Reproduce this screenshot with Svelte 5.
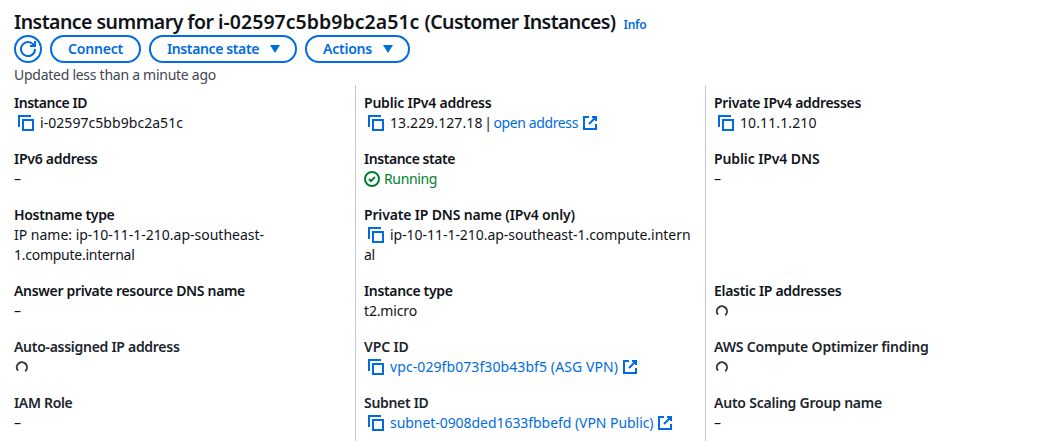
<script>
  const rows = [
    [
      { label: ['Instance ID', 73], copy: true, lines: [['i-02597c5bb9bc2a51c', 143]] },
      { label: ['Public IPv4 address', 127.5], copy: true, lines: [['13.229.127.18', 92.5]], link: ['open address', 84.5], split: true },
      { label: ['Private IPv4 addresses', 147], copy: true, lines: [['10.11.1.210', 76.5]] }
    ],
    [
      { label: ['IPv6 address', 83.5] },
      { label: ['Instance state', 91], running: true },
      { label: ['Public IPv4 DNS', 105.5] }
    ],
    [
      { label: ['Hostname type', 100.5], lines: [['IP name: ip-10-11-1-210.ap-southeast-', 250], ['1.compute.internal', 120.5]] },
      { label: ['Private IP DNS name (IPv4 only)', 211], copy: true, lines: [['ip-10-11-1-210.ap-southeast-1.compute.intern', 300.5], ['al', 11]] },
      null
    ],
    [
      { label: ['Answer private resource DNS name', 231] },
      { label: ['Instance type', 88.5], lines: [['t2.micro', 53]] },
      { label: ['Elastic IP addresses', 127.5], loading: true }
    ],
    [
      { label: ['Auto-assigned IP address', 165.5], loading: true, soft: true },
      { label: ['VPC ID', 44.5], copy: true, link: ['vpc-029fb073f30b43bf5 (ASG VPN)', 228], soft: true },
      { label: ['AWS Compute Optimizer finding', 214.5], loading: true, soft: true }
    ],
    [
      { label: ['IAM Role', 58.5], soft: true },
      { label: ['Subnet ID', 64.5], copy: true, link: ['subnet-0908ded1633fbbefd (VPN Public)', 263.5], soft: true },
      { label: ['Auto Scaling Group name', 168], soft: true }
    ]
  ];

  function fit(node, width) {
    const natural = node.getBoundingClientRect().width;
    node.style.letterSpacing = `${(width - natural) / node.textContent.length}px`;
  }
</script>

{#snippet copyIcon()}
  <svg class="icon copy" viewBox="0 0 16 16"><path d="M1 12V1h12M5 5h10v10H5z" /></svg>
{/snippet}

{#snippet externalIcon()}
  <svg class="icon external" viewBox="0 0 16 16"><path d="M10 2h4v4M7 9l7-7M14 9v5H2V2h5" /></svg>
{/snippet}

{#snippet caret()}
  <svg class="icon caret" viewBox="0 0 16 16"><path d="M3 4h10L8 12z" /></svg>
{/snippet}

<section>
  <header>
    <div class="heading">
      <h1><span use:fit={204}>Instance summary for&nbsp;</span><span use:fit={206.5}>i-02597c5bb9bc2a51c&nbsp;</span><span use:fit={191}>(Customer Instances)</span></h1>
      <a class="info" href="#info"><span use:fit={23}>Info</span></a>
    </div>
    <div class="actions">
      <button class="round" aria-label="Refresh">
        <svg class="icon" viewBox="0 0 16 16"><path d="M10 5h5V0M15 8a7 7 0 1 1-.7-3" /></svg>
      </button>
      <button><span use:fit={55}>Connect</span></button>
      <button><span use:fit={92}>Instance state</span>{@render caret()}</button>
      <button><span use:fit={49}>Actions</span>{@render caret()}</button>
    </div>
    <div class="updated"><span use:fit={202}>Updated less than a minute ago</span></div>
  </header>

  <div class="grid">
    {#each rows as row}
      {#each row as cell}
        <div class="cell">
          {#if cell}
            <div class="label" class:soft={cell.soft}><span use:fit={cell.label[1]}>{cell.label[0]}</span></div>
            <div class="value">
              {#if cell.copy}{@render copyIcon()}{/if}
              {#if cell.running}
                <svg class="icon ok" viewBox="0 0 16 16"><circle cx="8" cy="8" r="7" /><path d="m5 8 2 2 4-4" /></svg>
                <span class="running" use:fit={53}>Running</span>
              {:else if cell.loading}
                <svg class="icon spinner" viewBox="0 0 16 16"><path d="M4 11.6A5.1 5.1 0 1 1 11.2 12.2" /></svg>
              {:else if cell.lines}
                <span use:fit={cell.lines[0][1]}>{cell.lines[0][0]}</span>
              {:else if !cell.link}
                <span use:fit={7}>–</span>
              {/if}
              {#if cell.split}<span class="split">|</span>{/if}
              {#if cell.link}
                <a href="#resource"><span use:fit={cell.link[1]}>{cell.link[0]}</span>{@render externalIcon()}</a>
              {/if}
            </div>
            {#if cell.lines?.[1]}
              <div class="value"><span use:fit={cell.lines[1][1]}>{cell.lines[1][0]}</span></div>
            {/if}
          {/if}
        </div>
      {/each}
    {/each}
  </div>
</section>

<style>
  :global(body) {
    margin: 0;
    background: #fff;
  }
  section {
    height: 441px;
    overflow: hidden;
    font: 14px/20px 'Noto Sans', 'Open Sans', sans-serif;
    color: #0f141a;
    white-space: nowrap;
  }
  header {
    height: 85px;
    padding-left: 14px;
  }
  span {
    display: inline-block;
  }
  .heading {
    display: flex;
    align-items: baseline;
    gap: 8px;
    height: 27px;
    padding-top: 8px;
  }
  h1 {
    margin: 0;
    font-size: 19.5px;
    line-height: 27px;
    font-weight: 650;
  }
  a {
    color: #006ce0;
    text-decoration: none;
    display: flex;
    align-items: center;
  }
  .info {
    font-size: 12px;
    font-weight: 600;
  }
  .actions {
    display: flex;
    gap: 8px;
  }
  button {
    box-sizing: border-box;
    height: 28px;
    padding: 0 16px;
    display: flex;
    align-items: center;
    gap: 8px;
    border: 2px solid #006ce0;
    border-radius: 14px;
    background: #fff;
    color: #006ce0;
    font: inherit;
    font-weight: 650;
  }
  button:has(.caret) {
    padding: 0 12px 0 16px;
  }
  .round {
    width: 28px;
    padding: 0;
    justify-content: center;
  }
  .updated {
    color: #424650;
    line-height: 20px;
    padding-top: 2px;
  }
  .grid {
    display: grid;
    grid-template-columns: 350px 350px 1fr;
    padding-left: 5px;
  }
  .cell {
    box-sizing: border-box;
    min-height: 56px;
    padding: 8px 0 8px 8px;
    border-left: 1px solid #c6c6cd;
  }
  .cell:nth-child(3n + 1) {
    border-color: transparent;
  }
  .label {
    height: 20px;
    font-weight: 650;
  }
  .soft {
    color: #20252d;
  }
  .value {
    display: flex;
    align-items: center;
    height: 20px;
  }
  .icon {
    width: 16px;
    height: 16px;
    flex: none;
    fill: none;
    stroke: #006ce0;
    stroke-width: 2;
  }
  .copy {
    margin: 0 6px 0 4px;
  }
  .external {
    margin-left: 3.5px;
  }
  .caret {
    fill: #006ce0;
    stroke: none;
  }
  .ok {
    stroke: #00802f;
    margin-right: 4px;
  }
  .running {
    color: #00802f;
  }
  .spinner {
    stroke: #333843;
  }
  .split {
    width: 11px;
    text-align: center;
  }
</style>
